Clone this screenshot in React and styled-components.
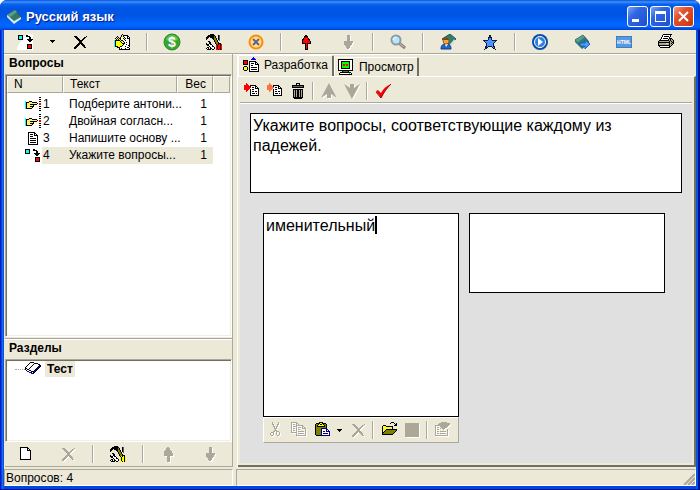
import React, { useState } from "react";
import styled, { createGlobalStyle, css } from "styled-components";

const FACE = "#ece9d8";
const SHADE = "#aca899";
const DARK = "#716f64";

const GlobalStyle = createGlobalStyle`
  * { box-sizing: border-box; }
  body {
    margin: 0;
    background: #fff;
    font: 12px/16px "Liberation Sans", Arial, sans-serif;
    color: #000;
  }
  button, textarea, input {
    font: inherit;
    color: inherit;
    margin: 0;
    padding: 0;
  }
`;

const questions = [
  { n: 1, text: "Подберите антони...", weight: 1, type: "choice" },
  { n: 2, text: "Двойная согласн...", weight: 1, type: "choice" },
  { n: 3, text: "Напишите основу ...", weight: 1, type: "page" },
  { n: 4, text: "Укажите вопросы...", weight: 1, type: "match" },
];

/* ---------- icons ---------- */

const palette = {
  k: "#000000",
  w: "#ffffff",
  y: "#ffee66",
  Y: "#ffff00",
  o: "#808000",
  r: "#ff0000",
  f: "#ff7040",
  c: "#00ffff",
  b: "#000080",
  B: "#0000ff",
  g: "#aca899",
  d: "#606060",
  G: "#00ff00",
  D: "#008000",
};

const maps = {
  choice: [
    "..............kk",
    "................",
    "..............kk",
    "................",
    "c...kkk.......kk",
    "ckkkyyykkkkk....",
    "ckyyyyyyyyyyk.rr",
    "ckyyykkkkkkk..rr",
    "ckyyyyyyk.......",
    "ckyyykkkk.....kk",
    "ckyyyyyk........",
    "ckkkkkk.......kk",
    "................",
    "..............kk",
  ],
  page: [
    "................",
    "...kkkkkkk......",
    "...kwwwwwkk.....",
    "...kwkkkwkwk....",
    "...kwwwwwkkkk...",
    "...kwkkkwwwwk...",
    "...kwwwwwwwwk...",
    "...kwkkkkkkwk...",
    "...kwwwwwwwwk...",
    "...kwkkkkkkwk...",
    "...kwwwwwwwwk...",
    "...kwkkkkkkwk...",
    "...kwwwwwwwwk...",
    "...kkkkkkkkkk...",
  ],
  match: [
    "................",
    "kkkkk...kk......",
    "kccck...kkkk....",
    "kccck......kk...",
    "kccck......kk...",
    "kkkkk....kkkkkk.",
    "..........kkkk..",
    "...........kk...",
    "................",
    "..........kkkkk.",
    "..........krrrk.",
    "..........krrrk.",
    "..........krrrk.",
    "..........kkkkk.",
  ],
  matchLarge: [
    "..........wwwwww",
    ".kkkkk...kkwwwww",
    ".kccck..wkkkkwww",
    ".kccck.wwwwwkkww",
    ".kccckwwwwwwkkww",
    ".kkkkkwwwwkkkkkk",
    ".....wwwwwwkkkkw",
    "....wwwwwwwwkkww",
    "...wwwwwwwwwwwww",
    "..wwwwwwwwwwwwww",
    "..wwwwwwwwkkkkkw",
    ".wwwwwwwwwkrrrkw",
    ".wwwwwwwwwkrrrkw",
    "wwwwwwwwwwkrrrkw",
    "wwwwwwwwwwkkkkkw",
    "wwwwwwwwwwwwwwww",
  ],
  edit: [
    "........k.......",
    ".......kYkkkkk..",
    "...k...kYkwwwkk.",
    "..kYk.kwwYkwwkwk",
    ".kwkYkkwwkYkwkkk",
    "..k.kYkwwwkwwwwk",
    "ckkkkkYkkwwkwwwk",
    "ckYYYYkYYkwwwwwk",
    "ckYYYYYkYYkwkwwk",
    "ckYYYYYYkkkwwwwk",
    "ckYYYYYYYkwwkwwk",
    "ckYYYYYYkwwwwwkk",
    "ckkkYYkkwwwkwwwk",
    "...kkkwwwwwwwkk.",
    ".....kwkwwwkwwwk",
    ".....kkkkkkkkkkk",
  ],
  tools: [
    "....kkkk........",
    "..kkkkkkk...kd..",
    ".kkkkkkkok..kd..",
    "kkk.kkkkok..kd..",
    "kk....kkook.kd..",
    "k......kook.kd..",
    "........kook.d..",
    "..kk....kook....",
    "...kk....kook...",
    "k..kk....kookkk.",
    "kkkwkk....kAkAkA",
    ".kkwwwk...AkAAkA",
    "...kwwkk..AkAAkA",
    ".kk.kwwwk.AkAAkA",
    "kwk.kkwwk.AkAAkA",
    ".kkkk.kk..AAkAkA",
  ],
  devTab: [
    "..........B.....",
    ".........BBB....",
    "........BBBBB...",
    "kkkkk...........",
    "krrrk.kkkkkkk...",
    "krrrk.kwwwwwkk..",
    "krrrk.kwkkkwkwk.",
    "kkkkk.kwwwwwkkkk",
    "......kwkkwwwwwk",
    ".kkk..kwwwwwwwwk",
    "kYYYk.kwkkkkkkwk",
    "kYYYk.kwwwwwwwwk",
    "kYYYk.kwkkkkkkwk",
    ".kkk..kwwwwwwwwk",
    "......kkkkkkkkkk",
  ],
  monitor: [
    "kkkkkkkkkkkkkkk.",
    "kwwwwwwwwwwwwwk.",
    "kwwkkkkkkkkkwwk.",
    "kwwkGGGGGGGkwwk.",
    "kwwkGGGGGGGkwwk.",
    "kwwkGrrGrrGkwwk.",
    "kwwkGrrGrrGkwwk.",
    "kwwkGGGGGGGkwwk.",
    "kwwkGGGGGGGkwwk.",
    "kwwkkkkkkkkkwwk.",
    "kwwwwwwwwwwwwwk.",
    "kkkkkkkkkkkkkkk.",
    "....kdddddk.....",
    "..kkkkkkkkkkk...",
    ".kwwwwwwwwwGwk..",
    ".kkkkkkkkkkkkk..",
  ],
  insert: [
    "..A.............",
    "..AA............",
    "AAAAA.kkkkkk....",
    "AAAAAAkwwwwkk...",
    "AAAAAAAwkkwkwk..",
    "AAAAAAwwwwwkkkk.",
    "AAAAA.kwkkwwwwk.",
    "..AA..kwwwwwwwk.",
    "..A...kwkkwkkwk.",
    "......kwwwwwwwk.",
    "......kwkkkwkwk.",
    "......kwwwwwwwk.",
    "......kkkkkkkkk.",
  ],
  trash: [
    "......kkkk......",
    "......k..k......",
    "..kkkkkkkkkkkk..",
    "..kddddddddddk..",
    "..kkkkkkkkkkkk..",
    "................",
    "...kkkkkkkkkk...",
    "...kgkgkkgkgk...",
    "...kgkgkkgkgk...",
    "...kgkgkkgkgk...",
    "...kgkgkkgkgk...",
    "...kgkgkkgkgk...",
    "...kgkgkkgkgk...",
    "...kgkgkkgkgk...",
    "...kkkkkkkkkk...",
    "....kkkkkkkk....",
  ],
  blank: [
    "................",
    "..kkkkkkkk......",
    "..kwwwwwwkk.....",
    "..kwwwwwwkwk....",
    "..kwwwwwwkkkk...",
    "..kwwwwwwwwwk...",
    "..kwwwwwwwwwk...",
    "..kwwwwwwwwwk...",
    "..kwwwwwwwwwk...",
    "..kwwwwwwwwwk...",
    "..kwwwwwwwwwk...",
    "..kwwwwwwwwwk...",
    "..kwwwwwwwwwk...",
    "..kkkkkkkkkkk...",
  ],
  book: [
    "................",
    ".....kkkk.......",
    "....kwwwwkkkk...",
    "...kwwwwkwwwwkk.",
    "..kwwwwkwwwwwwkk",
    ".kwwwwkwwwwwwkBk",
    "kwwwwkwwwwwwkBk.",
    "kkwwkwwwwwwkBk..",
    "kwkkwwwwwwkBk...",
    ".kwwkkwwwkBk....",
    "..BBwwkkkBk.....",
    "....BBkwkk......",
    "......BBk.......",
  ],
  cut: [
    "....g.....g.....",
    "....g.....g.....",
    "....gg...gg.....",
    ".....g...g......",
    ".....gg.gg......",
    "......g.g.......",
    "......ggg.......",
    ".......g........",
    "......ggg.......",
    ".....gg.ggg.....",
    "...ggg..g..g....",
    "..g..g..g..g....",
    "..g..g..g..g....",
    "...gg....gg.....",
  ],
  copy: [
    "gggggg..........",
    "g....gg.........",
    "g.gg.g.g........",
    "g....ggggggg....",
    "g.gggg.....gg...",
    "g....g.ggg.g.g..",
    "g.gg.g.....gggg.",
    "g....g.gg.....g.",
    "g.gg.g........g.",
    "g....g.gggggg.g.",
    "gggggg........g.",
    ".....g.gggggg.g.",
    ".....g........g.",
    ".....gggggggggg.",
  ],
  paste: [
    ".....kkkk.......",
    "..kkkkYYkkkk....",
    ".kookYkkYkook...",
    ".kokYYYYYYkok...",
    ".kokkkkkkkkok...",
    ".kooooooooook...",
    ".kooooobbbbbb...",
    ".kooooobwwwwbb..",
    ".kooooobwwwwbwb.",
    ".kooooobwbbwbbbb",
    ".kooooobwwwwwwwb",
    ".kooooobwbbbbbwb",
    ".kooooobwwwwwwwb",
    "..kkkkkbbbbbbbbb",
  ],
  open: [
    "..........kkk...",
    ".........k...k.k",
    "..............kk",
    "..kkk........kkk",
    ".kYyYkkkkkkk....",
    ".kyYyYyYyYyk....",
    ".kYyYyYyYyYk....",
    ".kyYykkkkkkkkkkk",
    ".kYykooooooooook",
    ".kykooooooooook.",
    ".kkooooooooook..",
    ".kooooooooook...",
    ".kkkkkkkkkkk....",
  ],
  props: [
    "......gggggg....",
    "....ggggggggggg.",
    "...gggggggggggg.",
    "gggggggggggggg..",
    "g....gggggggg...",
    "g.gg..gggggg....",
    "g....g.ggg......",
    "g.gg....g...g...",
    "g...........g...",
    "g.gg.gggggg.g...",
    "g...........g...",
    "g.gg.gggggg.g...",
    "g...........g...",
    "ggggggggggggg...",
  ],
  print: [
    ".....kkkkkkkkk..",
    "....kwwwwwwwk...",
    "....kwkkkkkwk...",
    "...kwwwwwwwk....",
    "...kwkkkkkwkkk..",
    "..kwwwwwwwkgkgk.",
    ".kkkkkkkkkkgkggk",
    "kggggggggggkgkgk",
    "kkkkkkkkkkkkggkk",
    "kgggggggYYgkgkgk",
    "kggggggggggkggk.",
    "kkkkkkkkkkkkgk..",
    ".kwwwwwwwwwkk...",
    "..kkkkkkkkkk....",
  ],
  cross: [
    "................",
    "................",
    "..kkk.........k.",
    "...kkk......kk..",
    "....kkk....kk...",
    ".....kkk..kk....",
    "......kkkkk.....",
    ".......kkk......",
    ".......kkk......",
    "......kkkkk.....",
    ".....kkk.kkk....",
    "....kkk...kkk...",
    "...kkk.....kk...",
    "..kkk.......kk..",
    "..kk............",
  ],
  crossOff: [
    "................",
    "................",
    "..ggg.........g.",
    "...ggg......gg..",
    "....ggg....gg...",
    ".....ggg..gg....",
    "......ggggg.....",
    ".......ggg......",
    ".......ggg......",
    "......ggggg.....",
    ".....ggg.ggg....",
    "....ggg...ggg...",
    "...ggg.....gg...",
    "..ggg.......gg..",
    "..gg............",
  ],
};

const Svg = styled.svg`
  display: block;
  flex: none;
  ${(p) =>
    p.$raised &&
    css`
      filter: drop-shadow(1px 1px 0 #fff);
    `}
`;

function PixelIcon({ name, accent = "#ff0000", raised }) {
  const cells = [];
  maps[name].forEach((row, y) => {
    let x = 0;
    while (x < row.length) {
      const ch = row[x];
      let end = x;
      while (row[end] === ch) end++;
      if (ch !== ".") {
        cells.push(
          <rect
            key={`${x}-${y}`}
            x={x}
            y={y}
            width={end - x}
            height={1}
            fill={ch === "A" ? accent : palette[ch]}
          />
        );
      }
      x = end;
    }
  });
  return (
    <Svg width="16" height="16" shapeRendering="crispEdges" $raised={raised}>
      {cells}
    </Svg>
  );
}

const CrossIcon = ({ off }) => <PixelIcon name={off ? "crossOff" : "cross"} raised={off} />;

const ArrowIcon = ({ down, off }) => (
  <Svg width="16" height="16" $raised={off} shapeRendering="crispEdges">
    <g transform={down ? "rotate(180 8 8)" : undefined}>
      <path
        d="M8 1l4 6v2H9v6H7V9H4V7z"
        fill={off ? SHADE : "#f00"}
        stroke={off ? SHADE : "#000"}
      />
    </g>
  </Svg>
);

const ChevronIcon = ({ down }) => (
  <Svg width="18" height="18" $raised>
    <path
      d="M9 1l8 15-6-4v4H7v-4l-6 4z"
      fill={SHADE}
      transform={down ? "rotate(180 9 9)" : undefined}
    />
  </Svg>
);

const CheckIcon = () => (
  <Svg width="16" height="16">
    <path d="M1 8l2-1 3 3C8 6 11 3 16 1 12 5 9 9 6 15z" fill="#f00" />
    <path d="M1 9l5 6C9 9 12 5 16 1" fill="none" stroke="#900" />
  </Svg>
);

const DollarIcon = () => (
  <Svg width="18" height="18">
    <circle cx="9" cy="9" r="8" fill="#35a52c" stroke="#2c8a2a" />
    <path d="M3 7a6 5 0 0 1 12 0 9 5 0 0 1-12 0z" fill="#7ed36b" opacity=".6" />
    <text x="9" y="14" fontSize="14" fontWeight="bold" textAnchor="middle" fill="#fff">
      $
    </text>
  </Svg>
);

const CancelIcon = () => (
  <Svg width="16" height="16">
    <circle cx="8" cy="8" r="6.5" fill="#ffdc9a" stroke="#ff8c00" strokeWidth="2" />
    <path d="M5 5l6 6M11 5l-6 6" stroke="#667" strokeWidth="2" />
  </Svg>
);

const SearchIcon = () => (
  <Svg width="16" height="16">
    <path d="M9 9l6 5" stroke="#8d7f78" strokeWidth="3" />
    <path d="M9 9l5 4" stroke="#d8c4b8" />
    <circle cx="6" cy="6" r="4.5" fill="#b9e6f5" stroke="#8a9ba8" strokeWidth="2" />
    <path d="M3 6a3 3 0 0 1 3-3" fill="none" stroke="#fff" />
  </Svg>
);

const UserIcon = () => (
  <Svg width="16" height="16">
    <path d="M2 5l8-5 6 5-6 6z" fill="#2f7d6c" stroke="#22594e" />
    <path d="M15 6L9 13" stroke="#ddd" strokeWidth="2" />
    <path d="M1 15c0-4 2-5 5-5s5 1 5 5z" fill="#2065cc" stroke="#123c85" />
    <path d="M5 10h3l-2 3z" fill="#fff" />
    <circle cx="6" cy="7" r="3" fill="#f4a83c" stroke="#a65a12" />
    <path d="M3 6c1-3 5-3 6 0z" fill="#7b431a" />
  </Svg>
);

const StarIcon = () => (
  <Svg width="16" height="16" shapeRendering="crispEdges">
    <path
      d="M8 1l2 5h5l-4 4 2 5-5-3-5 3 2-5-4-4h5z"
      fill="#4a94ff"
      stroke="#0a1a40"
    />
  </Svg>
);

const PlayIcon = () => (
  <Svg width="16" height="16">
    <circle cx="8" cy="8" r="8" fill="#0b4fa8" />
    <circle cx="8" cy="8" r="5.5" fill="#2c80dc" stroke="#fff" />
    <path d="M6 4l5 4-5 4z" fill="#fff" />
  </Svg>
);

const BookIcon = ({ arrow }) => (
  <Svg width="16" height="16">
    <path d="M1 6l8-5 6 7-7 6z" fill="#2f7a6d" stroke="#265c53" />
    <path d="M1 6l8-5 2 2-8 6z" fill="#5a9c90" />
    <path d="M1 6l7 6 7-4v2l-7 5-7-7z" fill={arrow ? "#2f7a6d" : "#dfe8e6"} />
    {arrow && <path d="M6 9h5V6l5 4-5 5v-3H6z" fill="#4a9cff" stroke="#1d5fb8" />}
  </Svg>
);

const HtmlIcon = () => (
  <Svg width="16" height="12">
    <rect width="16" height="12" fill="#3d7cc8" />
    <rect x="1" y="1" width="14" height="10" fill="#5a98de" />
    <text x="8" y="8" fontSize="5" fontWeight="bold" textAnchor="middle" fill="#fff">
      HTML
    </text>
  </Svg>
);

const CaretIcon = () => (
  <Svg width="5" height="3" shapeRendering="crispEdges">
    <path d="M0 0h5v1H0zM1 1h3v1H1zM2 2h1v1H2z" />
  </Svg>
);

const StopIcon = () => (
  <Svg width="16" height="16" $raised>
    <rect x="1" y="1" width="14" height="14" fill={SHADE} />
  </Svg>
);

const typeIcon = (name, props) => <PixelIcon name={name} {...props} />;

/* ---------- window ---------- */

const Window = styled.div`
  display: flex;
  flex-direction: column;
  height: 100vh;
  min-height: 400px;
  padding: 0 4px 4px;
  border-radius: 7px 7px 0 0;
  overflow: hidden;
  background: linear-gradient(
    to right,
    #0019cf 0 1px,
    #0a44dd 1px 2px,
    #166aee 2px 3px,
    #0855dd 3px 4px,
    #0046e0 4px calc(100% - 4px),
    #0855dd calc(100% - 4px) calc(100% - 2px),
    #001290 calc(100% - 2px)
  );
  box-shadow: inset 0 -1px 0 #00138c;
`;

const TitleBar = styled.header`
  display: flex;
  align-items: center;
  flex: none;
  gap: 2px;
  height: 30px;
  margin: 0 -4px;
  padding: 3px 6px 0;
  background: linear-gradient(
    #0a50d8 0,
    #3c94ff 2px,
    #0a62ee 4px,
    #0054e3 8px,
    #0055e6 16px,
    #0066ff 24px,
    #0062fa 27px,
    #0040d0 30px
  );
`;

const Title = styled.h1`
  flex: 1;
  margin: 0;
  padding-left: 2px;
  font-size: 13px;
  line-height: 20px;
  font-weight: bold;
  color: #fff;
  text-shadow: 1px 1px 1px #0a1883;
`;

const WindowButton = styled.button`
  display: flex;
  align-items: center;
  justify-content: center;
  width: 21px;
  height: 21px;
  border: 1px solid #fff;
  border-radius: 3px;
  background: ${(p) =>
    p.$close
      ? "linear-gradient(135deg, #f0a080, #e2522c 35%, #c83510)"
      : "linear-gradient(135deg, #7fa5f5, #2f66e4 35%, #1d4fd0)"};
`;

const Client = styled.div`
  display: flex;
  flex-direction: column;
  flex: 1;
  min-height: 0;
  background: ${FACE};
`;

const Toolbar = styled.div`
  display: flex;
  align-items: center;
  flex: none;
  height: 24px;
  ${(p) =>
    p.$ruled &&
    css`
      border-bottom: 1px solid ${SHADE};
      box-shadow: 0 1px 0 #fff;
    `}
`;

const ToolButton = styled.button`
  display: flex;
  align-items: center;
  justify-content: center;
  flex: none;
  width: ${(p) => p.$width || 42}px;
  height: 22px;
  border: 0;
  background: none;
`;

const Separator = styled.span`
  flex: none;
  width: 2px;
  height: 18px;
  margin: 0 3px;
  border-left: 1px solid ${SHADE};
  border-right: 1px solid #fff;
`;

const Body = styled.div`
  display: flex;
  flex: 1;
  min-height: 0;
`;

const Sidebar = styled.aside`
  display: flex;
  flex-direction: column;
  flex: none;
  width: 229px;
  padding-left: 1px;
  border-right: 1px solid ${SHADE};
`;

const PanelTitle = styled.h2`
  flex: none;
  margin: 0;
  padding: 1px 4px 3px;
  border-top: 1px solid #fff;
  font-size: 12px;
  line-height: 15px;
  font-weight: bold;
`;

const Sunken = styled.div`
  flex: ${(p) => (p.$height ? "none" : "1")};
  height: ${(p) => (p.$height ? p.$height + "px" : "auto")};
  min-height: 0;
  margin-bottom: ${(p) => (p.$height ? 0 : 1)}px;
  border: 1px solid;
  border-color: ${SHADE} #fff #fff ${SHADE};
  box-shadow: inset 1px 1px 0 ${DARK}, inset -1px -1px 0 #f1efe2;
  padding: 1px;
  background: #fff;
`;

const Divider = styled.div`
  flex: none;
  height: 1px;
  background: ${SHADE};
`;

const Grid = styled.table`
  width: 100%;
  border-collapse: separate;
  border-spacing: 0;
  table-layout: fixed;
  line-height: 17px;
`;

const HeadCell = styled.th`
  width: ${(p) => (p.$width ? p.$width + "px" : "auto")};
  height: 17px;
  padding: 0 6px;
  border: 1px solid;
  border-color: #fff ${SHADE} ${SHADE} #fff;
  background: ${FACE};
  font-weight: normal;
  line-height: 15px;
  text-align: ${(p) => p.$align || "left"};
`;

const SpacerRow = styled.tr`
  height: 3px;
`;

const Cell = styled.td`
  height: 17px;
  padding: 0 ${(p) => (p.$align ? 6 : 0)}px 0 6px;
  white-space: nowrap;
  text-align: ${(p) => p.$align || "left"};
  ${(p) => p.$selected && `background: ${FACE};`}
`;

const NumberCell = styled(Cell)`
  padding: 0 0 0 18px;
  ${(p) =>
    p.$selected &&
    `background: linear-gradient(to right, #fff 35px, ${FACE} 35px);`}
`;

const NumberLabel = styled.span`
  display: flex;
  align-items: center;
  gap: 2px;
  height: 17px;
`;

const Tree = styled.ul`
  margin: 0;
  padding: 0 0 0 8px;
  list-style: none;
`;

const TreeItem = styled.li`
  display: flex;
  align-items: center;
  height: 16px;
  font-weight: bold;

  &::before {
    content: "";
    width: 10px;
    border-top: 1px dotted ${SHADE};
  }
`;

const TreeLabel = styled.span`
  margin-left: 4px;
  padding: 0 2px;
  background: ${FACE};
  line-height: 16px;
`;

const Main = styled.main`
  display: flex;
  flex-direction: column;
  flex: 1;
  min-width: 0;
  margin-left: 4px;
  border-left: 1px solid #fff;
`;

const Tabs = styled.div`
  display: flex;
  align-items: flex-end;
  flex: none;
  height: 22px;
`;

const Tab = styled.button`
  display: flex;
  align-items: center;
  gap: 5px;
  height: ${(p) => (p.$active ? 21 : 19)}px;
  padding: ${(p) => (p.$active ? "0 4px 2px" : "0 3px")};
  border: solid;
  border-width: 1px 2px 0 1px;
  border-color: #fff ${DARK} #fff #fff;
  border-radius: 2px 2px 0 0;
  background: ${FACE};
`;

const Pane = styled.section`
  display: flex;
  flex-direction: column;
  flex: 1;
  min-height: 0;
  padding: 2px;
  border: solid;
  border-width: 1px 2px 2px 0;
  border-color: #fff ${DARK} ${DARK} #fff;
`;

const Canvas = styled.div`
  flex: 1;
  margin-top: 1px;
  padding: 9px 10px;
  background: #e0e0e0;
`;

const TextBox = styled.textarea`
  display: block;
  width: 100%;
  height: ${(p) => p.$height}px;
  padding: 2px;
  border: 1px solid #000;
  border-radius: 0;
  outline: 0;
  resize: none;
  background: #fff;
  font-size: 16px;
  line-height: 20px;
`;

const Answers = styled.div`
  display: grid;
  grid-template-columns: 1fr 1fr;
  align-items: start;
  gap: 10px;
  margin-top: 20px;
  padding: 0 17px 0 13px;
`;

const AnswerCard = styled.div`
  position: relative;
`;

const InsertionPoint = styled.span`
  position: absolute;
  top: 3px;
  left: 112px;
  width: 2px;
  height: 18px;
  background: #000;
`;

const CardToolbar = styled(Toolbar)`
  height: 26px;
  border: 1px solid;
  border-color: #fff ${SHADE} ${SHADE} #fff;
  background: ${FACE};
`;

const StatusBar = styled.footer`
  display: flex;
  flex: none;
  gap: 3px;
  height: 19px;
  padding-top: 2px;
`;

const StatusCell = styled.div`
  position: relative;
  flex: ${(p) => (p.$width ? "none" : "1")};
  width: ${(p) => (p.$width ? p.$width + "px" : "auto")};
  padding-left: 1px;
  border: 1px solid;
  border-color: ${SHADE} #fff #fff ${SHADE};
  line-height: 16px;
`;

const Grip = styled.svg`
  position: absolute;
  right: 0;
  bottom: 0;
`;

const mainTools = [
  { label: "Добавить вопрос", icon: typeIcon("matchLarge") },
  { label: "Тип вопроса", icon: <CaretIcon />, width: 13 },
  { label: "Удалить вопрос", icon: <CrossIcon /> },
  { label: "Изменить", icon: typeIcon("edit") },
  null,
  { label: "Оценка", icon: <DollarIcon /> },
  { label: "Настройки", icon: typeIcon("tools") },
  { label: "Отмена", icon: <CancelIcon /> },
  null,
  { label: "Вверх", icon: <ArrowIcon /> },
  { label: "Вниз", icon: <ArrowIcon down off /> },
  null,
  { label: "Поиск", icon: <SearchIcon /> },
  null,
  { label: "Автор", icon: <UserIcon /> },
  { label: "Избранное", icon: <StarIcon /> },
  null,
  { label: "Запуск", icon: <PlayIcon /> },
  { label: "Экспорт", icon: <BookIcon arrow /> },
  { label: "Экспорт в HTML", icon: <HtmlIcon /> },
  { label: "Печать", icon: typeIcon("print") },
];

const sectionTools = [
  { label: "Новый раздел", icon: typeIcon("blank") },
  { label: "Удалить раздел", icon: <CrossIcon off /> },
  null,
  { label: "Свойства раздела", icon: typeIcon("tools", { accent: "#ffff00" }) },
  null,
  { label: "Раздел вверх", icon: <ArrowIcon off /> },
  { label: "Раздел вниз", icon: <ArrowIcon down off /> },
];

const editTools = [
  { label: "Добавить вариант", icon: typeIcon("insert"), width: 23 },
  { label: "Вставить вариант", icon: typeIcon("insert", { accent: "#ff7040" }), width: 23 },
  { label: "Удалить вариант", icon: typeIcon("trash"), width: 23 },
  null,
  { label: "Вариант вверх", icon: <ChevronIcon />, width: 23 },
  { label: "Вариант вниз", icon: <ChevronIcon down />, width: 23 },
  null,
  { label: "Проверить", icon: <CheckIcon />, width: 23 },
];

const cardTools = [
  { label: "Вырезать", icon: typeIcon("cut", { raised: true }), width: 23 },
  { label: "Копировать", icon: typeIcon("copy", { raised: true }), width: 23 },
  { label: "Вставить", icon: typeIcon("paste"), width: 23 },
  { label: "Вид вставки", icon: <CaretIcon />, width: 13 },
  { label: "Очистить", icon: <CrossIcon off />, width: 23 },
  null,
  { label: "Открыть", icon: typeIcon("open"), width: 23 },
  { label: "Стоп", icon: <StopIcon />, width: 23 },
  null,
  { label: "Свойства", icon: typeIcon("props", { raised: true }), width: 23 },
];

const renderTools = (tools) =>
  tools.map((tool, idx) =>
    tool ? (
      <ToolButton key={idx} type="button" $width={tool.width} aria-label={tool.label}>
        {tool.icon}
      </ToolButton>
    ) : (
      <Separator key={idx} />
    )
  );

export default function App() {
  const [selected, setSelected] = useState(4);
  const [tab, setTab] = useState("dev");
  const [question, setQuestion] = useState(
    "Укажите вопросы, соответствующие каждому из падежей."
  );
  const [answer, setAnswer] = useState("именительный");
  const [pair, setPair] = useState("");

  return (
    <Window>
      <GlobalStyle />
      <TitleBar>
        <BookIcon />
        <Title>Русский язык</Title>
        <WindowButton type="button" aria-label="Свернуть">
          <Svg width="13" height="13" fill="#fff">
            <path d="M1 9h7v3H1z" />
          </Svg>
        </WindowButton>
        <WindowButton type="button" aria-label="Развернуть">
          <Svg width="13" height="13" fill="#fff" shapeRendering="crispEdges">
            <path d="M1 1h11v11H1zM2 4v7h9V4z" fillRule="evenodd" />
          </Svg>
        </WindowButton>
        <WindowButton type="button" aria-label="Закрыть" $close>
          <Svg width="13" height="13" stroke="#fff" strokeWidth="2">
            <path d="M2 2l9 9M11 2l-9 9" />
          </Svg>
        </WindowButton>
      </TitleBar>

      <Client>
        <Toolbar $ruled>{renderTools(mainTools)}</Toolbar>

        <Body>
          <Sidebar>
            <PanelTitle>Вопросы</PanelTitle>
            <Sunken>
              <Grid>
                <thead>
                  <tr>
                    <HeadCell $width={56}>N</HeadCell>
                    <HeadCell $width={114}>Текст</HeadCell>
                    <HeadCell $width={36} $align="right">Вес</HeadCell>
                    <HeadCell as="td" />
                  </tr>
                </thead>
                <tbody>
                  <SpacerRow />
                  {questions.map((q) => (
                    <tr key={q.n} onClick={() => setSelected(q.n)}>
                      <NumberCell $selected={q.n === selected}>
                        <NumberLabel>
                          <PixelIcon name={q.type} />
                          {q.n}
                        </NumberLabel>
                      </NumberCell>
                      <Cell $selected={q.n === selected}>{q.text}</Cell>
                      <Cell $selected={q.n === selected} $align="right">
                        {q.weight}
                      </Cell>
                      <td />
                    </tr>
                  ))}
                </tbody>
              </Grid>
            </Sunken>
            <Divider />
            <PanelTitle>Разделы</PanelTitle>
            <Sunken $height={83}>
              <Tree>
                <TreeItem>
                  <PixelIcon name="book" />
                  <TreeLabel>Тест</TreeLabel>
                </TreeItem>
              </Tree>
            </Sunken>
            <Toolbar>{renderTools(sectionTools)}</Toolbar>
            <Divider />
          </Sidebar>

          <Main>
            <Tabs role="tablist">
              <Tab
                type="button"
                role="tab"
                aria-selected={tab === "dev"}
                $active={tab === "dev"}
                onClick={() => setTab("dev")}
              >
                <PixelIcon name="devTab" />
                Разработка
              </Tab>
              <Tab
                type="button"
                role="tab"
                aria-selected={tab === "view"}
                $active={tab === "view"}
                onClick={() => setTab("view")}
              >
                <PixelIcon name="monitor" />
                Просмотр
              </Tab>
            </Tabs>
            <Pane>
              <Toolbar $ruled>{renderTools(editTools)}</Toolbar>
              <Canvas>
                <TextBox
                  aria-label="Текст вопроса"
                  $height={80}
                  spellCheck={false}
                  value={question}
                  onChange={(e) => setQuestion(e.target.value)}
                />
                <Answers>
                  <AnswerCard>
                    <TextBox
                      aria-label="Вариант"
                      $height={204}
                      spellCheck={false}
                      value={answer}
                      onChange={(e) => setAnswer(e.target.value)}
                    />
                    <InsertionPoint />
                    <CardToolbar>{renderTools(cardTools)}</CardToolbar>
                  </AnswerCard>
                  <TextBox
                    aria-label="Соответствие"
                    $height={80}
                    spellCheck={false}
                    value={pair}
                    onChange={(e) => setPair(e.target.value)}
                  />
                </Answers>
              </Canvas>
            </Pane>
          </Main>
        </Body>

        <StatusBar>
          <StatusCell $width={229}>Вопросов: {questions.length}</StatusCell>
          <StatusCell>
            <Grip width="12" height="12">
              <path d="M12 1L1 12M12 5l-7 7M12 9l-3 3" stroke={SHADE} strokeWidth="2" />
            </Grip>
          </StatusCell>
        </StatusBar>
      </Client>
    </Window>
  );
}
